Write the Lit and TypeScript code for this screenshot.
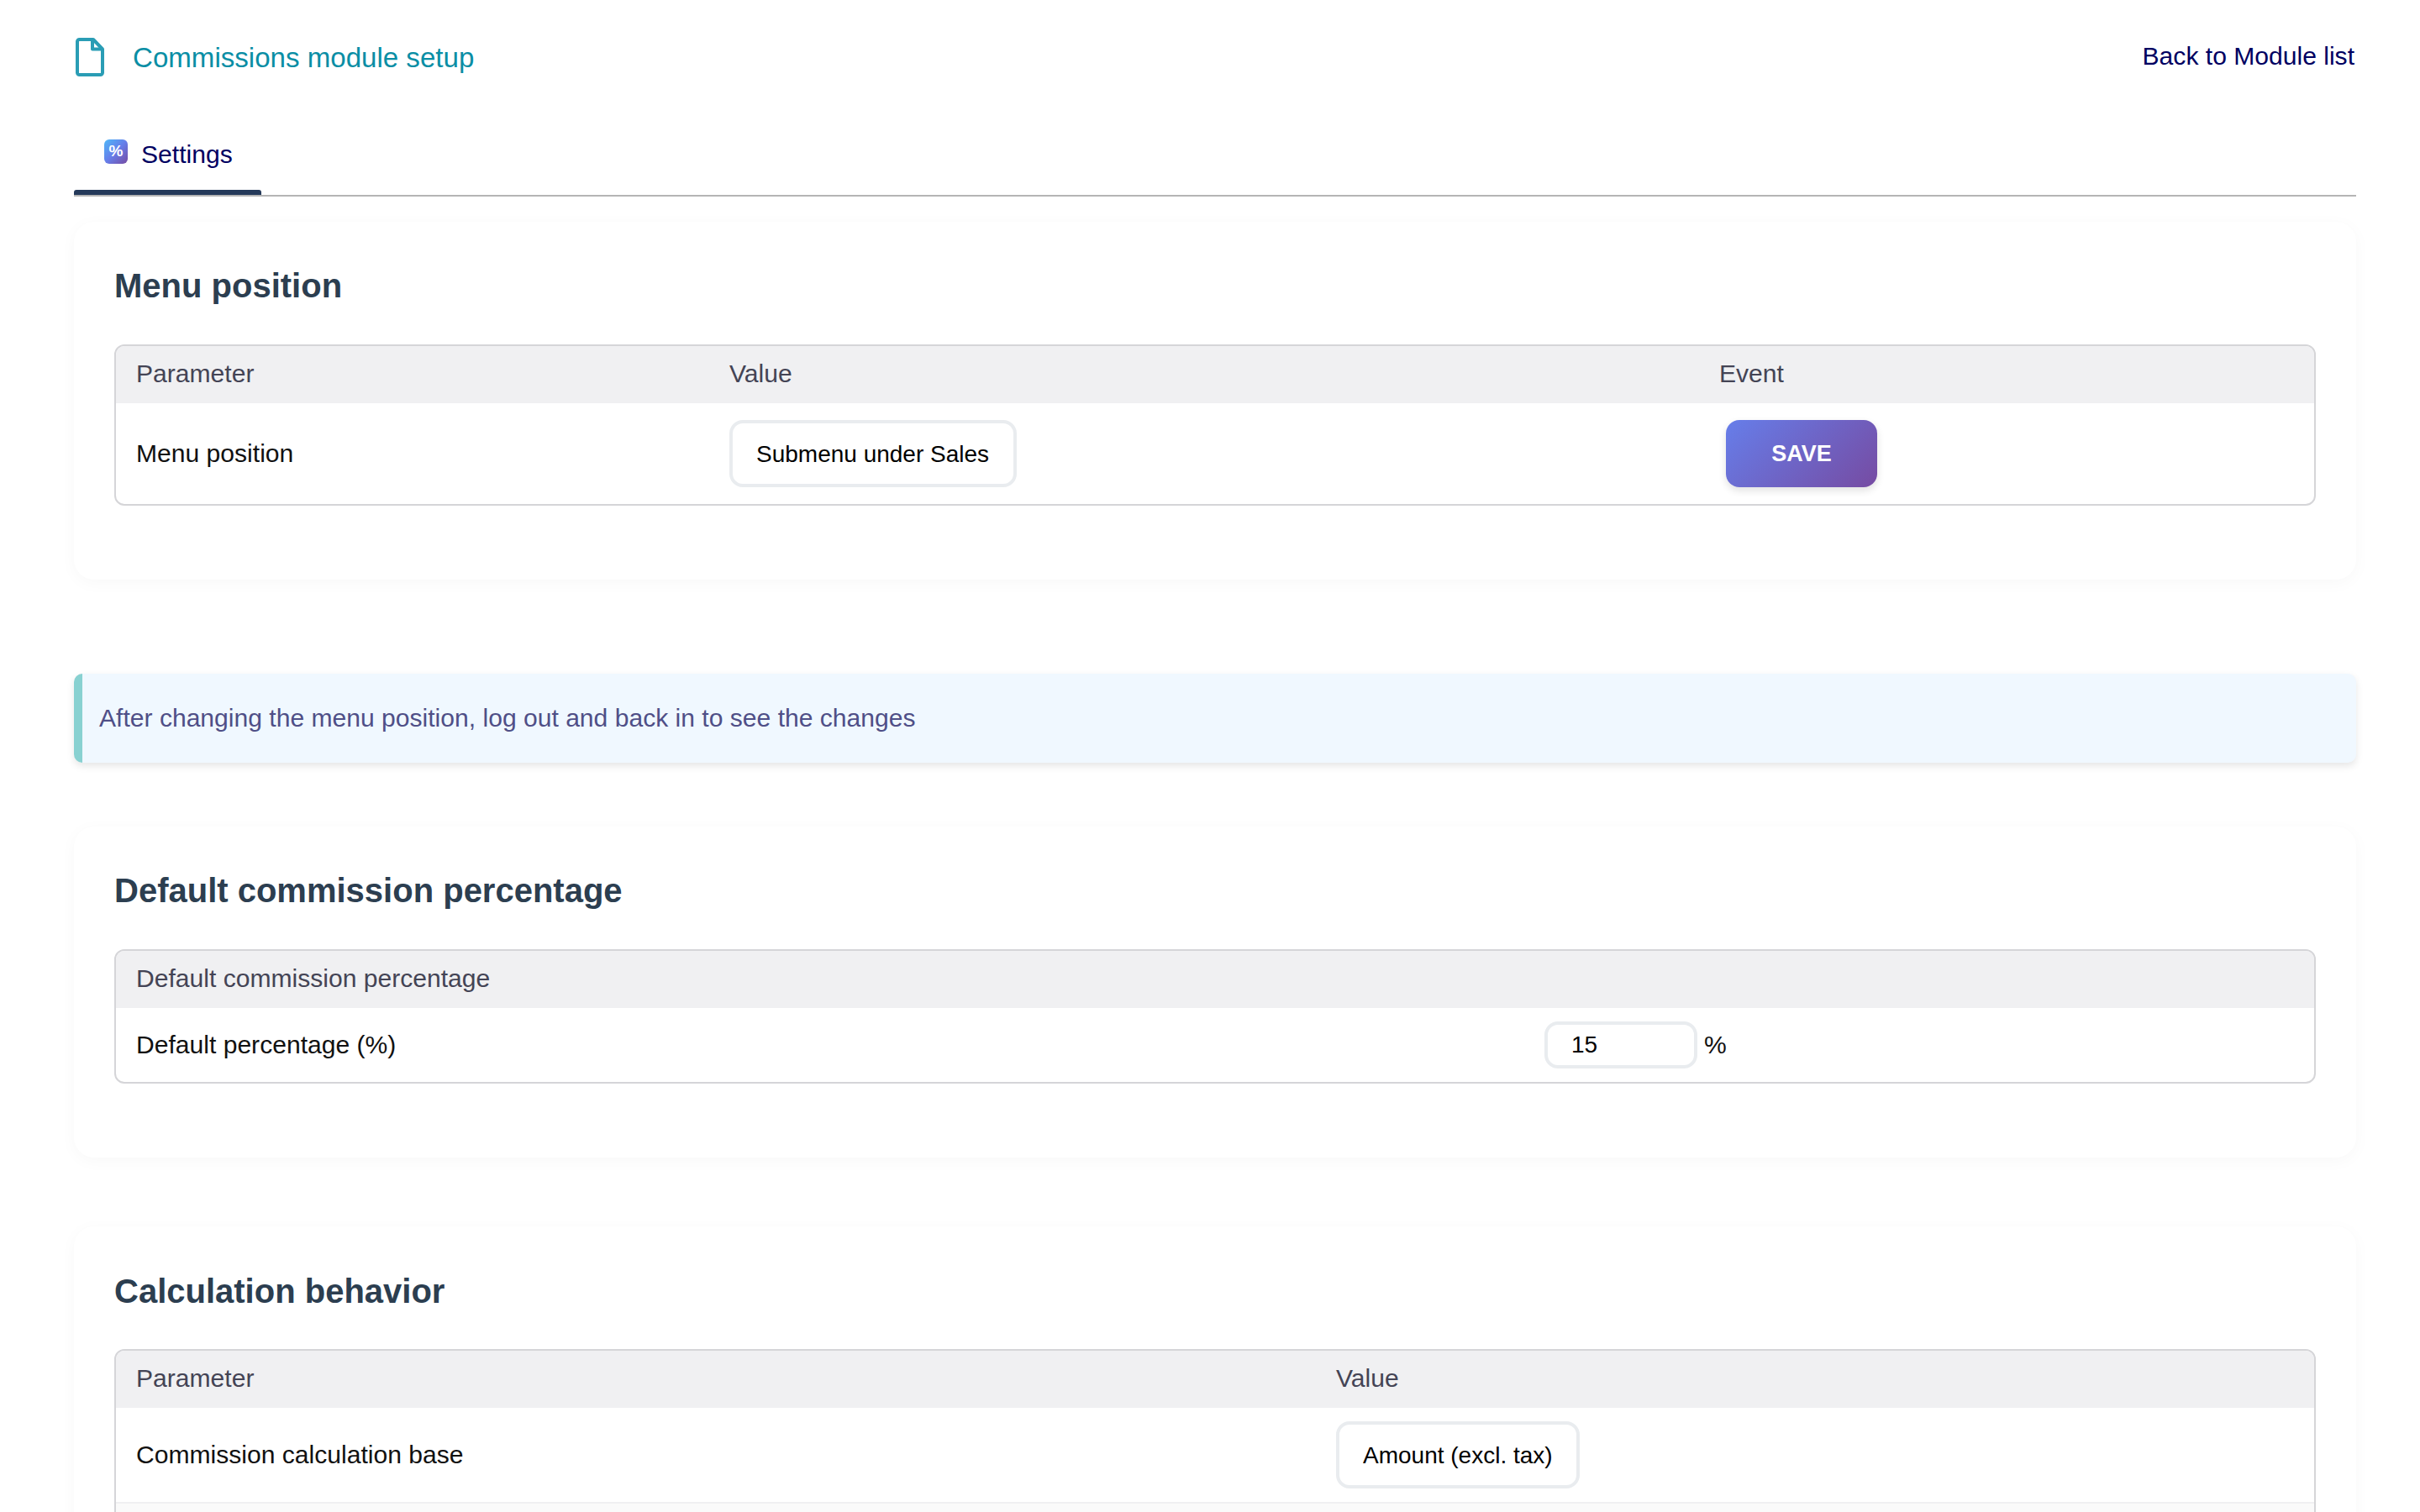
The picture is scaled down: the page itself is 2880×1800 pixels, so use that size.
import { LitElement, html, css } from "lit";
import { customElement } from "lit/decorators.js";

@customElement("app-root")
export class AppRoot extends LitElement {
  static styles = css`
    :host {
      display: block;
      height: 1800px;
      overflow: hidden;
      box-sizing: border-box;
      padding: 0 76px 0 88px;
      background: #fff;
      font-family: "Liberation Sans", Arial, sans-serif;
      font-size: 30.08px;
      color: #111;
    }
    .top {
      display: flex;
      justify-content: space-between;
      align-items: flex-start;
      height: 135px;
      padding-top: 45px;
      box-sizing: border-box;
    }
    .title {
      display: flex;
      align-items: center;
      gap: 34px;
      padding-left: 2px;
      color: #0a8ea5;
      font-size: 33.1px;
      line-height: 45px;
    }
    .title svg { display: block; }
    .back { color: #000061; line-height: 43px; margin-right: 2px; text-decoration: none; }
    .tabs {
      height: 99px;
      box-sizing: border-box;
      border-bottom: 2px solid #b5b5b5;
      display: flex;
    }
    .tab {
      position: relative;
      width: 223px;
      box-sizing: border-box;
      padding: 31px 0 0 36px;
      display: flex;
      align-items: flex-start;
      gap: 16px;
      color: #000061;
      line-height: 36px;
    }
    .tab::after {
      content: "";
      position: absolute;
      left: 0;
      right: 0;
      bottom: 0;
      height: 6px;
      background: #253a5a;
      border-radius: 3px 3px 0 0;
    }
    .pct {
      width: 28px;
      height: 29px;
      border-radius: 6px;
      background: linear-gradient(135deg, #4fb8f8, #667eea 50%, #764ba2);
      color: #fff;
      font-size: 19px;
      font-weight: 700;
      line-height: 27px;
      text-align: center;
    }
    .card {
      box-sizing: border-box;
      background: #fff;
      border-radius: 24px;
      box-shadow: 0 4px 20px rgba(0, 0, 0, 0.03);
      padding: 53px 48px 88px;
    }
    .c1 { margin-top: 30px; }
    .c2 { margin-top: 76px; }
    .c3 { margin-top: 82px; padding-top: 54px; }
    .c3 h2 { margin-bottom: 46px; }
    h2 {
      margin: 0 0 47px;
      font-size: 40px;
      line-height: 46px;
      font-weight: 700;
      color: #2c3e50;
    }
    .table {
      border: 2px solid #d5d5d8;
      border-radius: 12px;
      overflow: hidden;
    }
    .row { display: grid; align-items: center; }
    .g1 { grid-template-columns: 706px 1178px 1fr; }
    .g2 { grid-template-columns: 1676px 1fr; }
    .g3 { grid-template-columns: 1428px 1fr; }
    .head {
      background: #f0f0f2;
      color: #444455;
      height: 68px;
      padding-bottom: 3px;
      box-sizing: border-box;
    }
    .cell { padding: 0 24px; display: flex; align-items: center; }
    .body { padding: 16px 0; }
    .line { border-top: 2px solid #f0f0f2; height: 100px; background: #fafafa; }
    select, input {
      box-sizing: border-box;
      appearance: none;
      background: #fff;
      border: 4px solid #e9ecef;
      font-family: inherit;
      font-size: 28px;
      color: #000;
      outline: none;
    }
    select {
      height: 80px;
      border-radius: 16px;
      padding: 0 28px;
    }
    input {
      width: 182px;
      height: 56px;
      border-radius: 16px;
      padding: 0 0 0 28px;
      margin-right: 8px;
    }
    button {
      box-sizing: border-box;
      width: 180px;
      height: 80px;
      margin: 4px 0 4px 8px;
      border: 0;
      border-radius: 16px;
      background: linear-gradient(135deg, #667eea, #764ba2);
      box-shadow: 0 4px 10px rgba(0, 0, 0, 0.12);
      color: #fff;
      font-family: inherit;
      font-size: 27px;
      font-weight: 700;
    }
    .info {
      margin-top: 112px;
      height: 106px;
      box-sizing: border-box;
      display: flex;
      align-items: center;
      padding: 0 0 1px 20px;
      background: #f0f8ff;
      border-left: 10px solid #88d1d1;
      border-radius: 10px;
      box-shadow: 0 4px 10px rgba(0, 0, 0, 0.1);
      color: #4f4f87;
    }
  `;

  render() {
    return html`
      <div class="top">
        <div class="title">
          <svg width="34" height="46" viewBox="0 0 34 46" fill="none" stroke="#2a9db5" stroke-width="4" stroke-linejoin="round">
            <path d="M4.5 2H21L32 13.5V41.5a2.5 2.5 0 0 1-2.5 2.5H4.5A2.5 2.5 0 0 1 2 41.5V4.5A2.5 2.5 0 0 1 4.5 2Z" />
            <path d="M20 2V13.5H32" />
          </svg>
          <span>Commissions module setup</span>
        </div>
        <a class="back" href="#">Back to Module list</a>
      </div>
      <div class="tabs">
        <div class="tab"><span class="pct">%</span><span>Settings</span></div>
      </div>

      <section class="card c1">
        <h2>Menu position</h2>
        <div class="table">
          <div class="row g1 head">
            <div class="cell">Parameter</div>
            <div class="cell">Value</div>
            <div class="cell">Event</div>
          </div>
          <div class="row g1 body">
            <div class="cell">Menu position</div>
            <div class="cell"><select><option>Submenu under Sales</option></select></div>
            <div class="cell"><button>SAVE</button></div>
          </div>
        </div>
      </section>

      <div class="info">After changing the menu position, log out and back in to see the changes</div>

      <section class="card c2">
        <h2>Default commission percentage</h2>
        <div class="table">
          <div class="row g2 head">
            <div class="cell">Default commission percentage</div>
            <div class="cell"></div>
          </div>
          <div class="row g2 body">
            <div class="cell">Default percentage (%)</div>
            <div class="cell"><input value="15" />%</div>
          </div>
        </div>
      </section>

      <section class="card c3">
        <h2>Calculation behavior</h2>
        <div class="table">
          <div class="row g3 head">
            <div class="cell">Parameter</div>
            <div class="cell">Value</div>
          </div>
          <div class="row g3 body">
            <div class="cell">Commission calculation base</div>
            <div class="cell"><select><option>Amount (excl. tax)</option></select></div>
          </div>
          <div class="line"></div>
        </div>
      </section>
    `;
  }
}
